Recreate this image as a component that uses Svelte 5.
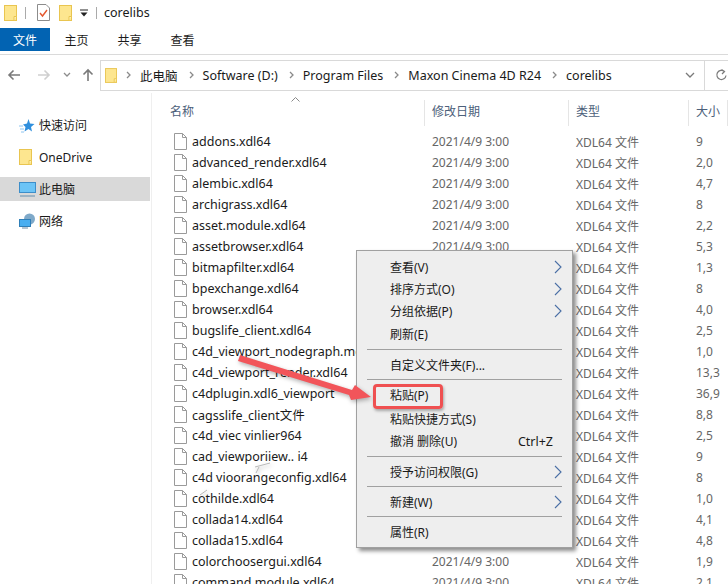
<script>
  const names = [
    'addons.xdl64', 'advanced_render.xdl64', 'alembic.xdl64', 'archigrass.xdl64', 'asset.module.xdl64',
    'assetbrowser.xdl64', 'bitmapfilter.xdl64', 'bpexchange.xdl64', 'browser.xdl64', 'bugslife_client.xdl64',
    'c4d_viewport_nodegraph.mo', 'c4d_viewport_render.xdl64', 'c4dplugin.xdl6_viewport', 'cagsslife_client文件',
    'c4d_viec vinlier964', 'cad_viewporiiew.. i4', 'c4d vioorangeconfig.xdl64', 'cothilde.xdl64',
    'collada14.xdl64', 'collada15.xdl64', 'colorchoosergui.xdl64', 'command.module.xdl64'
  ];
  const sizes = ['9', '2,0', '4,7', '8', '2,2', '5,3', '1,3', '8', '4,0', '2,5', '1,0', '13,3', '36,9', '8,8', '2,5', '9', '8', '1,0', '4,1', '4,8', '1,9', '2,1'];
  const files = names.map((name, i) => ({ name, size: sizes[i] }));

  const crumbs = ['此电脑', 'Software (D:)', 'Program Files', 'Maxon Cinema 4D R24', 'corelibs'];

  const menu = [
    { label: '查看(V)', arrow: true },
    { label: '排序方式(O)', arrow: true },
    { label: '分组依据(P)', arrow: true },
    { label: '刷新(E)' },
    { sep: true },
    { label: '自定义文件夹(F)...' },
    { sep: true, tight: true },
    { label: '粘贴(P)', paste: true },
    { label: '粘贴快捷方式(S)' },
    { label: '撤消 删除(U)', key: 'Ctrl+Z' },
    { sep: true, tight: true },
    { label: '授予访问权限(G)', arrow: true },
    { sep: true, tight: true },
    { label: '新建(W)', arrow: true },
    { sep: true, tight: true },
    { label: '属性(R)' }
  ];
</script>

{#snippet folder()}
  <svg class="folder" viewBox="0 0 13 16" width="13" height="16">
    <rect x="0.5" y="0.5" width="12" height="15" fill="#fde68f" stroke="#e9c550" />
    <path d="M10 15.5V11.5H12.5" fill="#fff2b8" stroke="#e9c550" />
  </svg>
{/snippet}

<div class="win">
  <div class="titlebar">
    {@render folder()}
    <span class="bar"></span>
    <svg class="docicon" viewBox="0 0 13 17" width="13" height="17">
      <path d="M0.5 0.5H9L12.5 4V16.5H0.5Z" fill="#fff" stroke="#8c8c8c" />
      <path d="M3 9L5.5 12L10 6" fill="none" stroke="#e4572e" stroke-width="1.4" />
    </svg>
    {@render folder()}
    <svg class="qat" viewBox="0 0 8 8" width="8" height="8">
      <path d="M0 1H8" stroke="#222" />
      <path d="M0.5 3.5H7.5L4 7.5Z" fill="#222" />
    </svg>
    <span class="bar last"></span>
    <span class="wintitle">corelibs</span>
  </div>

  <div class="tabs">
    <div class="tab file">文件</div>
    <div class="tab">主页</div>
    <div class="tab">共享</div>
    <div class="tab">查看</div>
  </div>

  <div class="navrow">
    <svg class="nav" viewBox="0 0 14 12" width="14" height="12"><path d="M13 6H2M6.5 1.5L2 6L6.5 10.5" fill="none" stroke="#7a7a7a" stroke-width="1.6" /></svg>
    <svg class="nav fwd" viewBox="0 0 14 12" width="14" height="12"><path d="M1 6H12M7.5 1.5L12 6L7.5 10.5" fill="none" stroke="#cfcfcf" stroke-width="1.6" /></svg>
    <svg class="nav down" viewBox="0 0 8 6" width="8" height="6"><path d="M1 1L4 4L7 1" fill="none" stroke="#8c8c8c" stroke-width="1.3" /></svg>
    <svg class="nav up" viewBox="0 0 12 14" width="12" height="14"><path d="M6 13V2M1.5 6.5L6 2L10.5 6.5" fill="none" stroke="#7a7a7a" stroke-width="1.6" /></svg>
    <div class="addr">
      {@render folder()}
      {#each crumbs as c}
        <svg class="sep" viewBox="0 0 5 8" width="5" height="8"><path d="M1 1L4 4L1 7" fill="none" stroke="#8a8a8a" stroke-width="1.3" /></svg>
        <span class="crumb">{c}</span>
      {/each}
      <svg class="addrdrop" viewBox="0 0 10 6" width="10" height="6"><path d="M1 1L5 5L9 1" fill="none" stroke="#7a7a7a" stroke-width="1.3" /></svg>
      <div class="refresh">
        <svg viewBox="0 0 12 12" width="12" height="12"><path d="M9.5 2.5A4.6 4.6 0 1 0 11 6.5M6.5 0.5L9.5 2.5L7 5" fill="none" stroke="#7a7a7a" stroke-width="1.2" /></svg>
      </div>
    </div>
  </div>

  <div class="main">
    <aside class="side">
      <div class="navitem">
        <svg viewBox="0 0 16 15" width="16" height="15"><path d="M9.5 1L11 5.5L15.5 6L12 9L13 13.5L9.5 11L5.5 13.5L6.5 9L4 6.5L8 5.5Z" fill="#2f8fdd" /><path d="M0 8H4M1 11H5M2 14H5" stroke="#8cc4f0" /></svg>
        <span>快速访问</span>
      </div>
      <div class="navitem">
        {@render folder()}
        <span>OneDrive</span>
      </div>
      <div class="navitem on">
        <svg viewBox="0 0 17 15" width="17" height="15"><rect x="0.5" y="0.5" width="16" height="10" fill="#6cc4f6" stroke="#3d8ec9" /><path d="M1 14H16" stroke="#8aa7bd" stroke-width="1.5" /></svg>
        <span>此电脑</span>
      </div>
      <div class="navitem">
        <svg viewBox="0 0 17 16" width="17" height="16"><circle cx="10.5" cy="6" r="5.5" fill="#7fa9c9" /><rect x="0.5" y="6.5" width="11" height="7" fill="#49aef0" stroke="#2f7fb8" /><path d="M3 15H9" stroke="#6f8aa0" /></svg>
        <span>网络</span>
      </div>
    </aside>

    <section class="list">
      <div class="sort">
        <svg viewBox="0 0 9 5" width="9" height="5"><path d="M0.5 4.5L4.5 0.5L8.5 4.5" fill="none" stroke="#8a8a8a" /></svg>
      </div>
      <div class="head">
        <div class="h name">名称</div>
        <div class="h">修改日期</div>
        <div class="h">类型</div>
        <div class="h">大小</div>
      </div>
      {#each files as f}
        <div class="row">
          <div class="fname">
            <svg viewBox="0 0 13 17" width="13" height="17"><path d="M0.5 0.5H8.5L12.5 4.5V16.5H0.5Z" fill="#fff" stroke="#9a9a9a" /><path d="M8.5 0.5V4.5H12.5" fill="none" stroke="#9a9a9a" /></svg>
            <span>{f.name}</span>
          </div>
          <div class="cell">2021/4/9 3:00</div>
          <div class="cell">XDL64 文件</div>
          <div class="cell">{f.size}</div>
        </div>
      {/each}
    </section>
  </div>

  <div class="ctx">
    {#each menu as m}
      {#if m.sep}
        <div class="ctxsep" class:tight={m.tight}></div>
      {:else}
        <div class="ctxitem" class:paste={m.paste}>
          <span>{m.label}</span>
          {#if m.key}<span class="key">{m.key}</span>{/if}
          {#if m.arrow}
            <svg viewBox="0 0 8 14" width="8" height="14"><path d="M1 1L7 7L1 13" fill="none" stroke="#4a6fa5" stroke-width="1.1" /></svg>
          {/if}
        </div>
      {/if}
    {/each}
  </div>

  <div class="mark"></div>
  <svg class="arrow" viewBox="0 0 728 584" width="728" height="584">
    <path d="M240 355L352 390L355 385L371 397L351 400L349 395L238 361Z" fill="#f2555a" />
    <path d="M255 467L270 463M256 473L259 467M200 495L207 490" stroke="#b9b9b9" fill="none" />
  </svg>
</div>

<style>
  :global(body) {
    margin: 0;
    background: #fff;
  }

  .win {
    position: relative;
    width: 728px;
    height: 584px;
    overflow: hidden;
    background: #fff;
    font-family: "Noto Sans", "Noto Sans CJK SC", sans-serif;
    font-size: 12px;
    color: #1a1a1a;
    display: flex;
    flex-direction: column;
  }

  .titlebar {
    height: 28px;
    display: flex;
    align-items: center;
    padding: 0 0 3px 4px;
    box-sizing: border-box;
  }
  .bar {
    width: 1px;
    height: 12px;
    background: #aaa;
    margin: 0 11px 0 8px;
  }
  .bar.last {
    margin: 0 7px 0 8px;
  }
  .docicon {
    margin-right: 9px;
  }
  .qat {
    margin-left: 8px;
  }
  .wintitle {
    font-size: 12.5px;
  }

  .tabs {
    height: 23px;
    display: flex;
    border-bottom: 1px solid #dadada;
    padding-bottom: 3px;
  }
  .tab {
    width: 53px;
    display: flex;
    align-items: center;
    justify-content: center;
  }
  .tab.file {
    width: 50px;
    background: #0263b2;
    color: #fff;
  }

  .navrow {
    height: 38px;
    display: flex;
    align-items: center;
    padding-left: 7px;
    box-sizing: border-box;
    padding-top: 2px;
  }
  .nav.fwd {
    margin-left: 16px;
  }
  .nav.down {
    margin-left: 12px;
  }
  .nav.up {
    margin-left: 11px;
  }
  .addr {
    margin-left: 6px;
    flex: 1;
    height: 31px;
    box-sizing: border-box;
    border: 1px solid #d9d9d9;
    border-right: none;
    display: flex;
    align-items: center;
    padding-left: 4px;
    font-size: 12.5px;
  }
  .addr .folder {
    width: 12px;
    height: 15px;
    margin-right: -2px;
  }
  .sep {
    margin: 0 9px 0 11px;
  }
  .crumb {
    white-space: nowrap;
  }
  .addrdrop {
    margin-left: auto;
    margin-right: 9px;
  }
  .refresh {
    width: 24px;
    height: 100%;
    border-left: 1px solid #d9d9d9;
    display: flex;
    align-items: center;
    padding-left: 10px;
    box-sizing: border-box;
  }

  .main {
    flex: 1;
    display: flex;
    min-height: 0;
  }

  .side {
    width: 152px;
    flex: none;
    box-sizing: border-box;
    border-right: 1px solid #efefef;
    padding-top: 20px;
  }
  .navitem {
    height: 24px;
    width: 150px;
    margin-bottom: 8px;
    display: flex;
    align-items: center;
    position: relative;
    padding-left: 39px;
    box-sizing: border-box;
  }
  .navitem svg {
    position: absolute;
    left: 19px;
  }
  .navitem.on {
    background: #d9d9d9;
  }

  .list {
    flex: 1;
    position: relative;
    min-width: 0;
  }
  .sort {
    position: absolute;
    left: 139px;
    top: 4px;
    line-height: 0;
  }
  .head,
  .row {
    display: grid;
    grid-template-columns: 273px 144px 120px 1fr;
  }
  .head {
    height: 38px;
    padding-top: 7px;
    box-sizing: border-box;
  }
  .h {
    border-right: 1px solid #e5e5e5;
    padding-left: 7px;
    color: #4c607a;
    line-height: 24px;
    height: 26px;
    white-space: nowrap;
  }
  .h.name {
    padding-left: 18px;
  }
  .row {
    height: 21px;
    align-items: center;
  }
  .fname {
    display: flex;
    align-items: center;
    gap: 5px;
    padding-left: 22px;
    white-space: nowrap;
    overflow: hidden;
    font-size: 12.5px;
  }
  .cell {
    padding-left: 7px;
    color: #666;
    white-space: nowrap;
  }

  .ctx {
    position: absolute;
    left: 356px;
    top: 250px;
    width: 217px;
    box-sizing: border-box;
    padding: 5px 0 4px;
    background: #eeeeee;
    border: 1px solid #a0a0a0;
    box-shadow: 3px 3px 4px rgba(0, 0, 0, 0.45);
    color: #1a1a1a;
  }
  .ctxitem {
    height: 22.2px;
    display: flex;
    align-items: center;
    padding-left: 33px;
    padding-right: 10px;
    white-space: nowrap;
  }
  .ctxitem.paste {
    margin-bottom: 2px;
  }
  .ctxitem svg {
    margin-left: auto;
  }
  .key {
    margin-left: auto;
    margin-right: 9px;
    font-size: 12.5px;
  }
  .ctxsep {
    height: 1px;
    margin: 4px 10px;
    background: #a0a0a0;
  }
  .ctxsep.tight {
    margin: 3.5px 10px;
  }

  .mark {
    position: absolute;
    left: 373px;
    top: 384px;
    width: 70px;
    height: 25px;
    box-sizing: border-box;
    border: 3px solid #ef5051;
    border-radius: 4px;
    box-shadow: 1px 2px 3px rgba(0, 0, 0, 0.3);
  }
  .arrow {
    position: absolute;
    left: 0;
    top: 0;
    filter: drop-shadow(1px 2px 2px rgba(0, 0, 0, 0.3));
  }
</style>
